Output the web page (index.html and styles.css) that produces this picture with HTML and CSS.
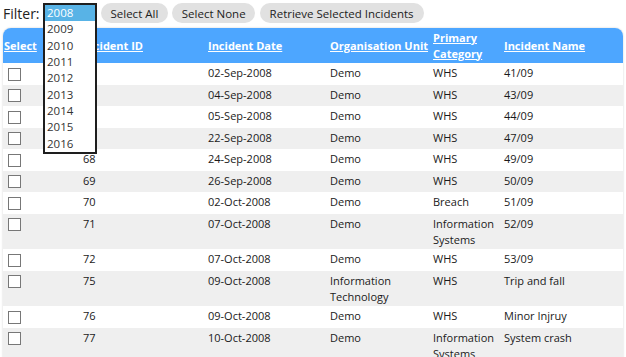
FILE: index.html
```html
<!doctype html>
<html lang="en">
  <head>
    <meta charset="UTF-8" />
    <title>Incidents</title>
    <link rel="stylesheet" href="styles.css">
  </head>
  <body>
    <div class="toolbar">
      <label class="filter-label">Filter:</label>
      <div class="filter-select">
        <ul class="year-list">
          <li class="selected">2008</li>
          <li>2009</li>
          <li>2010</li>
          <li>2011</li>
          <li>2012</li>
          <li>2013</li>
          <li>2014</li>
          <li>2015</li>
          <li>2016</li>
        </ul>
      </div>
      <button>Select All</button>
      <button>Select None</button>
      <button class="wide">Retrieve Selected Incidents</button>
    </div>

    <div class="grid-wrap">
      <table class="grid">
        <colgroup>
          <col class="c-select" />
          <col class="c-id" />
          <col class="c-date" />
          <col class="c-unit" />
          <col class="c-cat" />
          <col class="c-name" />
        </colgroup>
        <thead>
          <tr>
            <th><a>Select</a></th>
            <th><a>Incident ID</a></th>
            <th><a>Incident Date</a></th>
            <th><a>Organisation Unit</a></th>
            <th><a>Primary Category</a></th>
            <th><a>Incident Name</a></th>
          </tr>
        </thead>
        <tbody>
          <tr><td><input type="checkbox" /></td><td>60</td><td>02-Sep-2008</td><td>Demo</td><td>WHS</td><td>41/09</td></tr>
          <tr><td><input type="checkbox" /></td><td>62</td><td>04-Sep-2008</td><td>Demo</td><td>WHS</td><td>43/09</td></tr>
          <tr><td><input type="checkbox" /></td><td>63</td><td>05-Sep-2008</td><td>Demo</td><td>WHS</td><td>44/09</td></tr>
          <tr><td><input type="checkbox" /></td><td>65</td><td>22-Sep-2008</td><td>Demo</td><td>WHS</td><td>47/09</td></tr>
          <tr><td><input type="checkbox" /></td><td>68</td><td>24-Sep-2008</td><td>Demo</td><td>WHS</td><td>49/09</td></tr>
          <tr><td><input type="checkbox" /></td><td>69</td><td>26-Sep-2008</td><td>Demo</td><td>WHS</td><td>50/09</td></tr>
          <tr><td><input type="checkbox" /></td><td>70</td><td>02-Oct-2008</td><td>Demo</td><td>Breach</td><td>51/09</td></tr>
          <tr><td><input type="checkbox" /></td><td>71</td><td>07-Oct-2008</td><td>Demo</td><td>Information Systems</td><td>52/09</td></tr>
          <tr><td><input type="checkbox" /></td><td>72</td><td>07-Oct-2008</td><td>Demo</td><td>WHS</td><td>53/09</td></tr>
          <tr><td><input type="checkbox" /></td><td>75</td><td>09-Oct-2008</td><td>Information Technology</td><td>WHS</td><td>Trip and fall</td></tr>
          <tr><td><input type="checkbox" /></td><td>76</td><td>09-Oct-2008</td><td>Demo</td><td>WHS</td><td>Minor Injruy</td></tr>
          <tr><td><input type="checkbox" /></td><td>77</td><td>10-Oct-2008</td><td>Demo</td><td>Information Systems</td><td>System crash</td></tr>
        </tbody>
      </table>
    </div>
  </body>
</html>
```

FILE: styles.css
```css
html,
body {
  margin: 0;
  overflow: hidden;
}
body {
  font-family: "Open Sans", Arial, sans-serif;
  font-size: 11px;
  color: #1a1a1a;
  padding: 3px 3px 0 3px;
  background: #fff;
}
.toolbar {
  display: flex;
  align-items: center;
  height: 20px;
}
.filter-label {
  font-size: 14px;
  color: #222;
  width: 40px;
}
.filter-select {
  position: relative;
  width: 54px;
  height: 20px;
  margin-right: 4px;
}
.year-list {
  position: absolute;
  top: 0;
  left: 0;
  z-index: 2;
  list-style: none;
  margin: 0;
  padding: 0;
  width: 50px;
  border: 2px solid #1e1e1e;
  background: #fff;
  font-size: 11.5px;
  color: #333;
}
.year-list li {
  height: 16.35px;
  line-height: 16px;
  padding-left: 2px;
}
.year-list .selected {
  background: #58b3e6;
  color: #fff;
}
button {
  font-family: inherit;
  font-size: 11.5px;
  color: #222;
  background: #e1e1e1;
  border: none;
  border-radius: 10px;
  height: 20px;
  padding: 0 9.5px;
  margin-right: 4.5px;
  cursor: pointer;
}
button.wide {
  padding: 0 10px;
}
.grid-wrap {
  margin-top: 5px;
  width: 620px;
  border-radius: 8px 8px 0 0;
  box-shadow: 0 0 2px rgba(0, 0, 0, 0.22);
  overflow: hidden;
}
.grid {
  border-collapse: collapse;
  table-layout: fixed;
  width: 620px;
}
.c-select { width: 79px; }
.c-id { width: 125px; }
.c-date { width: 122px; }
.c-unit { width: 103px; }
.c-cat { width: 71px; }
.c-name { width: 120px; }
.grid th {
  background: #4da6ff;
  color: #fff;
  font-size: 11px;
  font-weight: bold;
  text-align: left;
  vertical-align: middle;
  line-height: 16px;
  padding: 1.5px 0 1.5px 1px;
}
.grid th a {
  text-decoration: underline;
  text-underline-offset: 1px;
}
.grid td {
  vertical-align: top;
  line-height: 16px;
  padding: 2px 0 1.5px 1px;
}
.grid tbody tr:nth-child(even) td {
  background: #efefef;
}
.grid input[type="checkbox"] {
  appearance: none;
  -webkit-appearance: none;
  width: 13px;
  height: 13px;
  margin: 2.5px 3px 2.5px 4px;
  border: 1px solid #777;
  background: #fff;
  vertical-align: top;
}
```
